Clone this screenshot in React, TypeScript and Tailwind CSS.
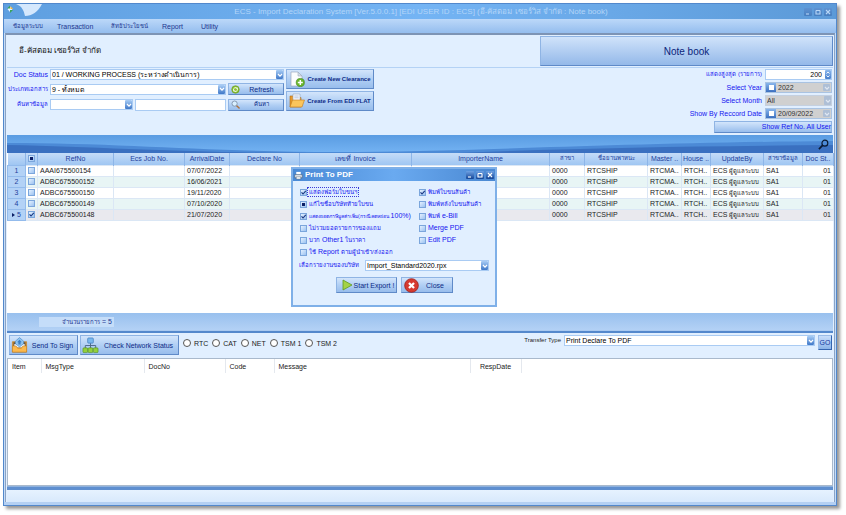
import { useState, type ReactNode } from "react";
import clsx from "clsx";

const MENU = [
  { label: "ข้อมูลระบบ", width: "w-[44px]", thai: true },
  { label: "Transaction", width: "w-[54px]" },
  { label: "สิทธิประโยชน์", width: "w-[51px]", thai: true },
  { label: "Report", width: "w-[39px]" },
  { label: "Utility", width: "w-[40px]" },
];

const COLUMNS = [
  { label: "RefNo", width: "w-[76px]" },
  { label: "Ecs Job No.", width: "w-[71px]" },
  { label: "ArrivalDate", width: "w-[45px]" },
  { label: "Declare No", width: "w-[70px]" },
  { label: "เลขที่ Invoice", width: "w-[112px]" },
  { label: "ImporterName", width: "w-[138px]" },
  { label: "สาขา", width: "w-[35px]", thai: true },
  { label: "ชื่อยานพาหนะ", width: "w-[63px]", thai: true },
  { label: "Master ..", width: "w-[34px]" },
  { label: "House ..", width: "w-[29px]" },
  { label: "UpdateBy", width: "w-[53px]" },
  { label: "สาขาข้อมูล", width: "w-[39px]", thai: true },
  { label: "Doc St..", width: "w-[31px]" },
];

const ROWS = [
  { ref: "AAAI675500154", date: "07/07/2022" },
  { ref: "ADBC675500152", date: "16/06/2021" },
  { ref: "ADBC675500150", date: "19/11/2020" },
  { ref: "ADBC675500149", date: "07/10/2020" },
  { ref: "ADBC675500148", date: "21/07/2020" },
];

const MESSAGE_COLUMNS = [
  { label: "Item", width: "w-[33px]" },
  { label: "MsgType", width: "w-[103px]" },
  { label: "DocNo", width: "w-[81px]" },
  { label: "Code", width: "w-[49px]" },
  { label: "Message", width: "w-[196px]" },
  { label: "RespDate", width: "w-[51px]" },
];

const NETWORKS = ["RTC", "CAT", "NET", "TSM 1", "TSM 2"];

type CheckState = "on" | "off" | "mixed";
type Option = { key: string; label: ReactNode; state: CheckState };

const LEFT_OPTIONS: Option[] = [
  { key: "form", label: <Thai>แสดงฟอร์มใบขนฯ</Thai>, state: "on" },
  { key: "company", label: <Thai>แก้ไขชื่อบริษัทท้ายใบขน</Thai>, state: "mixed" },
  {
    key: "vat",
    label: (
      <>
        <span className="text-[5px]">แสดงยอดภาษีมูลค่าเพิ่ม(กรณีลดหย่อน</span> 100%)
      </>
    ),
    state: "on",
  },
  { key: "free", label: <Thai>ไม่รวมยอดรายการของแถม</Thai>, state: "off" },
  {
    key: "other",
    label: (
      <>
        <Thai>บวก</Thai> Other1 <Thai>ในราคา</Thai>
      </>
    ),
    state: "off",
  },
  {
    key: "importer",
    label: (
      <>
        <Thai>ใช้</Thai> Report <Thai>ตามผู้นำเข้า/ส่งออก</Thai>
      </>
    ),
    state: "off",
  },
];

const RIGHT_OPTIONS: Option[] = [
  { key: "goods", label: <Thai>พิมพ์ใบขนสินค้า</Thai>, state: "on" },
  { key: "back", label: <Thai>พิมพ์หลังใบขนสินค้า</Thai>, state: "off" },
  {
    key: "ebill",
    label: (
      <>
        <Thai>พิมพ์</Thai> e-Bill
      </>
    ),
    state: "off",
  },
  { key: "merge", label: "Merge PDF", state: "off" },
  { key: "edit", label: "Edit PDF", state: "off" },
];

// Thai glyphs run wide next to the Latin text, so they are set one step smaller
function Thai({ children }: { children: ReactNode }) {
  return <span className="text-[6px]">{children}</span>;
}

function CheckBox({
  id,
  initial = "off",
  label,
}: {
  id?: string;
  initial?: CheckState;
  label?: string;
}) {
  const [state, setState] = useState<CheckState>(initial);
  return (
    <span className="relative block size-[7px] shrink-0">
      <input
        id={id}
        type="checkbox"
        aria-label={label}
        checked={state !== "off"}
        onChange={() => setState(state === "on" ? "off" : "on")}
        className="block size-[7px] appearance-none border border-[#7ba6dc] bg-linear-to-br from-[#e4f1ff] to-[#9cc2f0]"
      />
      {state === "on" && (
        <svg viewBox="0 0 7 7" className="pointer-events-none absolute inset-0 size-[7px]">
          <path d="M1.5 3.4 3 5 5.8 1.8" fill="none" stroke="#16357f" strokeWidth="1.1" />
        </svg>
      )}
      {state === "mixed" && (
        <span className="pointer-events-none absolute inset-[2px] bg-[#0b1f66]" />
      )}
    </span>
  );
}

function ArrowBox({ disabled = false }: { disabled?: boolean }) {
  return (
    <span
      className={clsx(
        "pointer-events-none absolute inset-y-px right-px flex w-[7px] items-center justify-center rounded-[1px]",
        disabled
          ? "bg-[#aebfd6]"
          : "bg-linear-to-b from-[#a9cdf5] to-[#3f78c8]"
      )}
    >
      <svg viewBox="0 0 6 6" className="size-[6px]">
        <path d="M1 2 3 4.2 5 2" fill="none" stroke={disabled ? "#dfe7f2" : "#fff"} strokeWidth="1.2" />
      </svg>
    </span>
  );
}

function Combo({
  id,
  value,
  label,
  className,
  disabled = false,
}: {
  id?: string;
  value: string;
  label?: string;
  className?: string;
  disabled?: boolean;
}) {
  return (
    <span className={clsx("relative block", className)}>
      <select
        id={id}
        aria-label={label}
        disabled={disabled}
        className={clsx(
          "block h-[11px] w-full appearance-none border pl-px leading-[9px] opacity-100",
          disabled ? "border-[#c4d0e0] bg-[#d0d0d0] text-[#333]" : "border-[#a9cbf3] bg-white text-black"
        )}
      >
        <option>{value}</option>
      </select>
      <ArrowBox disabled={disabled} />
    </span>
  );
}

function DateField({ id, value }: { id: string; value: string }) {
  return (
    <span className="relative flex h-[11px] w-[67px] items-center border border-[#a9c3e2] bg-[#d0d0d0]">
      <span className="flex h-full w-[10px] shrink-0 items-center justify-center bg-linear-to-b from-[#8ab6ec] to-[#3c70c0]">
        <input type="checkbox" aria-label={`Use ${value}`} className="size-[5px] appearance-none bg-white" />
      </span>
      <input
        id={id}
        defaultValue={value}
        disabled
        className="w-[46px] min-w-0 bg-transparent pl-[2px] leading-[9px] text-[#333]"
      />
      <ArrowBox disabled />
    </span>
  );
}

function PushButton({
  children,
  className,
  icon,
}: {
  children: ReactNode;
  className?: string;
  icon?: ReactNode;
}) {
  return (
    <button
      type="button"
      className={clsx(
        "flex items-center border border-[#8fb4e4] border-r-[#5f8ac8] border-b-[#5f8ac8] bg-linear-to-b from-[#d3e5fb] via-[#b1cff4] to-[#98bdec] text-[#0d2a86] hover:brightness-105",
        className
      )}
    >
      {icon}
      <span className="flex-1 whitespace-nowrap text-center">{children}</span>
    </button>
  );
}

function WindowButtons({ dim = false }: { dim?: boolean }) {
  const shapes = [
    { name: "Minimize", d: "M2 6h3" },
    { name: "Maximize", d: "M2 2.5h4M2 2.5v3.5h4V2.5" },
    { name: "Close", d: "M2 2 6 6M6 2 2 6" },
  ];
  return (
    <div className="flex gap-[2px]">
      {shapes.map((shape) => (
        <button
          key={shape.name}
          type="button"
          aria-label={shape.name}
          className={clsx(
            "size-[8px] rounded-[1px]",
            dim
              ? "bg-linear-to-b from-[#5f93d2] to-[#477ebf]"
              : "bg-linear-to-b from-[#6fa2e4] to-[#134596]"
          )}
        >
          <svg viewBox="0 0 8 8" className="size-[8px]">
            <path d={shape.d} fill="none" stroke={dim ? "#b8d6f6" : "#fff"} strokeWidth="1.1" />
          </svg>
        </button>
      ))}
    </div>
  );
}

function NewDocIcon() {
  return (
    <svg viewBox="0 0 16 16" className="size-[16px] shrink-0">
      <path d="M2 1h7l4 4v10H2z" fill="#fbfcfe" stroke="#9fabbd" strokeWidth=".7" />
      <path d="M9 1v4h4z" fill="#d4dce8" stroke="#9fabbd" strokeWidth=".6" />
      <circle cx="11.3" cy="11.5" r="4.1" fill="#68b52c" stroke="#3f851a" strokeWidth=".6" />
      <path d="M11.3 9v5M8.8 11.5h5" stroke="#fff" strokeWidth="1.5" />
    </svg>
  );
}

function FolderIcon() {
  return (
    <svg viewBox="0 0 16 16" className="size-[16px] shrink-0">
      <path d="M1 3h4l1 1.5h6V14H1z" fill="#e79a2b" stroke="#b26c12" strokeWidth=".6" />
      <path d="M4 1h7v9H4z" fill="#f6f8fc" stroke="#94a4ba" strokeWidth=".6" />
      <path d="M5.3 3h4.4M5.3 4.8h4.4" stroke="#9fb3d1" strokeWidth=".7" />
      <path d="M3.5 7h12L13 14H1z" fill="#fbc55b" stroke="#c27b1b" strokeWidth=".6" />
    </svg>
  );
}

function RefreshIcon() {
  return (
    <svg viewBox="0 0 10 10" className="size-[9px] shrink-0">
      <circle cx="5" cy="5" r="4.2" fill="#8ac22f" stroke="#5e8f1c" strokeWidth=".6" />
      <path d="M2.8 5.5a2.3 2.3 0 0 1 4-1.8M7.2 4.6a2.3 2.3 0 0 1-4 1.8" fill="none" stroke="#fff" strokeWidth="1" />
      <path d="M7.5 2.5v2H5.7zM2.5 7.5v-2h1.8z" fill="#fff" />
    </svg>
  );
}

function SearchIcon() {
  return (
    <svg viewBox="0 0 10 10" className="size-[9px] shrink-0">
      <path d="m6 6 3 3" stroke="#b0703a" strokeWidth="1.6" strokeLinecap="round" />
      <circle cx="4" cy="4" r="2.9" fill="#d9efff" stroke="#7f93ac" strokeWidth="1" />
    </svg>
  );
}

function SendIcon() {
  return (
    <svg viewBox="0 0 18 18" className="size-[17px] shrink-0">
      <path d="M1.5 5h15v11h-15z" fill="#f6ad3c" stroke="#b9761a" strokeWidth=".7" />
      <path d="M2.5 5.5h13V11h-13z" fill="#6b5334" />
      <path d="M3.5 7.5h11V11h-11z" fill="#eaf2fb" />
      <path d="M9 .6 13.4 4.500V7L9 10.500 4.600 7V4.500z" fill="#8fc4f0" stroke="#3f7fc0" strokeWidth=".6" />
      <path d="M9 3 11.500 5.500h-1.300V8H7.800V5.500H6.500z" fill="#3b7fc6" />
      <path d="M1.5 9.5h4L7 12h4l1.5-2.500h4V16h-15z" fill="#fcb94e" stroke="#b9761a" strokeWidth=".5" />
    </svg>
  );
}

function NetworkIcon() {
  return (
    <svg viewBox="0 0 18 18" className="size-[17px] shrink-0">
      <path d="M9 6v6M3.5 12V9h11v3" fill="none" stroke="#4c6688" strokeWidth="1" />
      <rect x="6" y="1" width="6" height="5.5" rx="1" fill="#79b8ee" stroke="#3d78b8" strokeWidth=".7" />
      <rect x="1" y="11.5" width="5" height="5" rx="1" fill="#93d03c" stroke="#4c8b1b" strokeWidth=".6" />
      <rect x="6.5" y="11.5" width="5" height="5" rx="1" fill="#93d03c" stroke="#4c8b1b" strokeWidth=".6" />
      <rect x="12" y="11.5" width="5" height="5" rx="1" fill="#93d03c" stroke="#4c8b1b" strokeWidth=".6" />
    </svg>
  );
}

function TitleBar() {
  return (
    <header className="relative flex h-[15px] items-center justify-end overflow-hidden bg-linear-to-r from-[#5f9fe0] via-[#74b4f4] to-[#5c9ad8] pr-[4px]">
      <svg viewBox="0 0 60 15" className="absolute top-0 left-0 h-[15px] w-[60px]">
        <path d="M12 0C18 2 20 7 21 12C28 12 34 8 38 0z" fill="#d5e8fd" />
        <path d="M6 2.5 8.5 5 6 8 3.5 5z" fill="#e9f6ff" />
        <path d="M6 1.5v3H3zM6 9V6h3z" fill="#3aa35c" />
        <path d="M6.5 2 9 5H6.5z" fill="#f3b73c" />
      </svg>
      <h1 className="flex-1 pl-[34px] text-center text-[8px] leading-[15px] whitespace-nowrap text-[#b3d5f8]">
        ECS - Import Declaration System [Ver.5.0.0.1] [EDI USER ID : ECS] (อี-คัสตอม เซอร์วิส จำกัด : Note book)
      </h1>
      <WindowButtons dim />
    </header>
  );
}

function FilterForm() {
  return (
    <section className="flex items-start justify-between border-t border-[#b4d2f5] pt-px pr-px pb-[2px]">
      <div className="flex gap-[2px]">
        <div className="grid w-[277px] grid-cols-[41px_minmax(0,1fr)] items-center gap-x-[2px] gap-y-[3px]">
          <label htmlFor="doc-status" className="text-right whitespace-nowrap text-[#1515f0]">
            Doc Status
          </label>
          <Combo id="doc-status" value="01 / WORKING PROCESS (ระหว่างดำเนินการ)" />
          <label htmlFor="doc-type" className="text-right text-[6px] whitespace-nowrap text-[#1515f0]">
            ประเภทเอกสาร
          </label>
          <div className="flex items-center gap-[2px]">
            <Combo id="doc-type" value="9 - ทั้งหมด" className="min-w-0 flex-1" />
            <PushButton className="h-[12px] w-[56px] pl-[2px]" icon={<RefreshIcon />}>
              Refresh
            </PushButton>
          </div>
          <label htmlFor="search-field" className="text-right text-[6px] whitespace-nowrap text-[#1515f0]">
            ค้นหาข้อมูล
          </label>
          <div className="flex items-center gap-[2px]">
            <Combo id="search-field" value="" className="w-[83px]" label="Search by" />
            <input
              aria-label="Search text"
              className="h-[12px] min-w-0 flex-1 border border-[#a9cbf3] bg-white px-px"
            />
            <PushButton className="h-[12px] w-[56px] pl-[2px] text-[6px]" icon={<SearchIcon />}>
              ค้นหา
            </PushButton>
          </div>
        </div>
        <div className="flex w-[88px] flex-col gap-[2px] text-[6px] font-bold">
          <PushButton className="h-[20px] pl-[2px]" icon={<NewDocIcon />}>
            Create New Clearance
          </PushButton>
          <PushButton className="h-[20px] pl-[2px]" icon={<FolderIcon />}>
            Create From EDI FLAT
          </PushButton>
        </div>
      </div>

      <div className="grid grid-cols-[1fr_67px] items-center gap-x-[3px] gap-y-[2px] text-right text-[#1515f0]">
        <label htmlFor="max-rows" className="text-[6px]">
          แสดงสูงสุด (รายการ)
        </label>
        <span className="relative block">
          <input
            id="max-rows"
            defaultValue="200"
            className="block h-[11px] w-full border border-[#a9cbf3] bg-white pr-[9px] text-right leading-[9px] text-black"
          />
          <span className="pointer-events-none absolute inset-y-px right-px w-[6px] rounded-[1px] bg-linear-to-b from-[#8db8ec] to-[#4a80cc]">
            <svg viewBox="0 0 6 9" className="h-[9px] w-[6px]">
              <path d="m1.5 3.5 1.5-1.5 1.5 1.5M1.5 5.5 3 7l1.5-1.5" fill="none" stroke="#fff" strokeWidth=".9" />
            </svg>
          </span>
        </span>
        <label htmlFor="year">Select Year</label>
        <DateField id="year" value="2022" />
        <label htmlFor="month">Select Month</label>
        <Combo id="month" value="All" disabled />
        <label htmlFor="record-date">Show By Reccord Date</label>
        <DateField id="record-date" value="20/09/2022" />
        <button
          type="button"
          className="col-span-2 h-[12px] w-[118px] justify-self-end border border-[#8fb4e4] border-b-[#5f8ac8] bg-linear-to-b from-[#d3e5fb] to-[#98bdec] text-right leading-[10px]"
        >
          Show Ref No. All User
        </button>
      </div>
    </section>
  );
}

function DeclarationGrid() {
  return (
    <table className="w-full table-fixed border-collapse">
      <colgroup>
        <col className="w-[18px]" />
        <col className="w-[12px]" />
        {COLUMNS.map((column) => (
          <col key={column.label} className={column.width} />
        ))}
      </colgroup>
      <thead>
        <tr className="h-[12px] bg-linear-to-b from-[#c5dcf8] to-[#9fc6f2] text-[#23409c]">
          <th className="border-r border-[#8db5e8] p-0" />
          <th className="border-r border-[#8db5e8] py-0 pr-0 pl-[2px]">
            <CheckBox initial="mixed" label="Select all" />
          </th>
          {COLUMNS.map((column) => (
            <th
              key={column.label}
              className={clsx(
                "overflow-hidden border-r border-[#8db5e8] p-0 text-center font-normal whitespace-nowrap",
                column.thai && "text-[6px]"
              )}
            >
              {column.label}
            </th>
          ))}
        </tr>
      </thead>
      <tbody>
        {ROWS.map((row, i) => {
          const current = i === ROWS.length - 1;
          return (
            <tr
              key={row.ref}
              className={clsx(
                "h-[11px] [&>td]:overflow-hidden [&>td]:border [&>td]:border-[#dbe7f5] [&>td]:py-0 [&>td]:pr-0 [&>td]:pl-[2px] [&>td]:whitespace-nowrap",
                current ? "bg-[#e9e9ee]" : i % 2 ? "bg-[#e8f5f5]" : "bg-white"
              )}
            >
              <th className="border border-[#93bbec] bg-[#b3d2f6] p-0 font-normal text-[#23409c]">
                <span className="flex items-center justify-center gap-[2px]">
                  {current && (
                    <svg viewBox="0 0 3 4" className="h-[4px] w-[3px]">
                      <path d="M0 0 3 2 0 4z" fill="#0b1f66" />
                    </svg>
                  )}
                  {i + 1}
                </span>
              </th>
              <td>
                <CheckBox initial={current ? "on" : "off"} label={`Select ${row.ref}`} />
              </td>
              <td>{row.ref}</td>
              <td />
              <td>{row.date}</td>
              <td />
              <td />
              <td />
              <td>0000</td>
              <td>RTCSHIP</td>
              <td>RTCMA..</td>
              <td>RTCH..</td>
              <td>
                ECS <Thai>ผู้ดูแลระบบ</Thai>
              </td>
              <td>SA1</td>
              <td className="text-right">
                <span className="pr-[2px]">01</span>
              </td>
            </tr>
          );
        })}
      </tbody>
    </table>
  );
}

function OptionList({ options, prefix }: { options: Option[]; prefix: string }) {
  return (
    <div className="flex flex-col">
      {options.map((option, i) => (
        <div key={option.key} className="flex h-[12px] items-center">
          <CheckBox id={`${prefix}-${option.key}`} initial={option.state} />
          <label
            htmlFor={`${prefix}-${option.key}`}
            className={clsx(
              "border px-px leading-[8px] whitespace-nowrap",
              prefix === "form" && i === 0 ? "border-dotted border-[#3b3bd8]" : "border-transparent"
            )}
          >
            {option.label}
          </label>
        </div>
      ))}
    </div>
  );
}

function PrintDialog() {
  return (
    <div
      role="dialog"
      aria-label="Print To PDF"
      className="absolute top-[14px] left-[284px] w-[206px] border-2 border-[#7fb0e8] bg-[#e1efff] pb-[12px] text-[#1515f0]"
    >
      <div className="flex h-[12px] items-center bg-linear-to-r from-[#4a8ad6] via-[#6aaaf0] to-[#4a88d2] pr-px pl-px">
        <svg viewBox="0 0 10 10" className="size-[9px]">
          <path d="M2.5 1h5v3h-5z" fill="#fff" />
          <path d="M.8 4h8.4v3.5H.8z" fill="#dfe5ec" stroke="#44576e" strokeWidth=".6" />
          <path d="M2.5 6.5h5V9h-5z" fill="#fff" stroke="#44576e" strokeWidth=".5" />
        </svg>
        <h2 className="flex-1 pl-[2px] text-[8px] leading-[12px] font-bold text-white">Print To PDF</h2>
        <WindowButtons />
      </div>
      <div className="grid grid-cols-[119px_1fr] pt-[5px] pl-[7px]">
        <OptionList options={LEFT_OPTIONS} prefix="form" />
        <OptionList options={RIGHT_OPTIONS} prefix="output" />
      </div>
      <div className="flex items-center pt-[2px] pr-[6px] pl-[6px]">
        <label htmlFor="report" className="w-[66px] text-[6px] whitespace-nowrap">
          เลือกรายงานของบริษัท
        </label>
        <Combo id="report" value="Import_Standard2020.rpx" className="flex-1" />
      </div>
      <div className="flex justify-center gap-[4px] pt-[6px]">
        <PushButton
          className="h-[16px] w-[61px] pl-[4px]"
          icon={
            <svg viewBox="0 0 12 12" className="size-[12px] shrink-0">
              <path d="M2 1v10l9-5z" fill="#a4d245" stroke="#5f9a22" strokeWidth=".8" />
            </svg>
          }
        >
          Start Export !
        </PushButton>
        <PushButton
          className="h-[16px] w-[52px] pl-[2px]"
          icon={
            <svg viewBox="0 0 16 16" className="size-[15px] shrink-0">
              <circle cx="8" cy="8" r="7.3" fill="#d63a30" stroke="#9a1c17" strokeWidth=".8" />
              <path d="m5.3 5.3 5.4 5.4M10.7 5.3l-5.4 5.4" stroke="#fff" strokeWidth="2.4" />
            </svg>
          }
        >
          Close
        </PushButton>
      </div>
    </div>
  );
}

function TransferBar() {
  return (
    <div className="flex h-[25px] items-start bg-[#e1efff] pt-[2px] pr-px pl-[2px]">
      <PushButton className="h-[20px] w-[69px] pl-px" icon={<SendIcon />}>
        Send To Sign
      </PushButton>
      <PushButton className="ml-[2px] h-[20px] w-[99px] pl-px" icon={<NetworkIcon />}>
        Check Network Status
      </PushButton>
      <div className="ml-[4px] flex h-[16px] items-center gap-[4px]">
        {NETWORKS.map((name) => (
          <label key={name} className="flex items-center gap-[3px] whitespace-nowrap">
            <input
              type="radio"
              name="network"
              className="size-[8px] appearance-none rounded-full border border-[#555] bg-white checked:bg-[#2d62b5]"
            />
            {name}
          </label>
        ))}
      </div>
      <label htmlFor="transfer" className="ml-auto pr-[3px] text-[6px] leading-[11px]">
        Transfer Type
      </label>
      <Combo id="transfer" value="Print Declare To PDF" className="w-[251px]" />
      <button
        type="button"
        className="ml-[3px] h-[15px] w-[14px] border border-[#9bbce8] border-r-[#3565b0] border-b-[#3565b0] bg-linear-to-b from-[#c9defa] to-[#8ab3e8] text-center text-[#1538a0]"
      >
        GO
      </button>
    </div>
  );
}

export default function App() {
  return (
    <div className="flex min-h-screen flex-col bg-white pt-[3px] pr-[9px] pb-[9px] pl-[3px] font-['Liberation_Sans','Noto_Sans',sans-serif] text-[7px] leading-[9px] text-[#222]">
      <div className="flex flex-1 flex-col border border-[#5288cc] bg-[#c5dcf7] shadow-[3px_3px_3px_#999]">
        <TitleBar />
        <nav className="flex h-[14px] items-center bg-linear-to-b from-[#bcd8f9] to-[#94bdee] pl-[9px] text-[#1c3690]">
          {MENU.map((item) => (
            <button
              key={item.label}
              type="button"
              className={clsx("text-left whitespace-nowrap", item.width, item.thai && "text-[6px]")}
            >
              {item.label}
            </button>
          ))}
        </nav>
        <main className="mx-px flex flex-1 flex-col border-x border-t-2 border-x-[#8ba3c4] border-t-[#7d94b5] bg-[#e1efff] px-px">
          <div className="flex h-[32px] items-center justify-between pl-[12px]">
            <h2 className="text-[8px] leading-[12px] whitespace-nowrap text-[#111]">อี-คัสตอม เซอร์วิส จำกัด</h2>
            <button
              type="button"
              className="h-[30px] w-[36%] border border-[#8fb4e4] border-r-[#5f8ac8] border-b-[#5f8ac8] bg-linear-to-b from-[#d0e3fa] to-[#94b9e9] text-[10px] text-[#0b1f7a]"
            >
              Note book
            </button>
          </div>
          <FilterForm />
          <div className="relative flex h-[18px] shrink-0 items-center justify-end overflow-hidden bg-linear-to-b from-[#5a9ce2] to-[#74b3f3] pr-[4px]">
            <svg viewBox="0 0 826 18" preserveAspectRatio="none" className="absolute inset-0 size-full">
              <path d="M0 8C120 8 200 17 330 17S600 8 826 6V18H0z" fill="#4c8ad6" />
              <path d="M0 10C100 12 180 18 300 18H0zM450 18C560 13 700 11 826 10V18z" fill="#3a70c0" />
            </svg>
            <svg viewBox="0 0 12 12" className="relative size-[11px]">
              <circle cx="7.5" cy="4.5" r="3.2" fill="none" stroke="#0a1a33" strokeWidth="1.3" />
              <path d="M5 7 1 11" stroke="#0a1a33" strokeWidth="1.8" />
            </svg>
          </div>
          <section className="relative min-h-[160px] bg-white">
            <DeclarationGrid />
            <PrintDialog />
          </section>
          <div className="flex h-[17px] items-center bg-linear-to-b from-[#98c0ee] to-[#b3d1f5] pl-[32px]">
            <div className="h-[10px] w-[75px] bg-[#c5ddf9] pr-[2px] text-right text-[#1c3690]">
              <Thai>จำนวนรายการ</Thai> = 5
            </div>
          </div>
          <div className="h-[3px] border-t border-[#a9c9f0] bg-[#5488cc]" />
          <TransferBar />
          <section className="flex-1 border border-[#a9b9cc] bg-white">
            <table className="w-full table-fixed border-collapse">
              <colgroup>
                {MESSAGE_COLUMNS.map((column) => (
                  <col key={column.label} className={column.width} />
                ))}
                <col />
              </colgroup>
              <thead>
                <tr className="h-[14px]">
                  {MESSAGE_COLUMNS.map((column) => (
                    <th
                      key={column.label}
                      className={clsx(
                        "border-r border-[#e4e8ee] p-0 font-normal",
                        column.label === "RespDate" ? "text-center" : "pl-[4px] text-left"
                      )}
                    >
                      {column.label}
                    </th>
                  ))}
                  <th />
                </tr>
              </thead>
            </table>
          </section>
          <div className="h-[4px] border-t border-[#8fb2de] bg-[#5f8fd0]" />
          <footer className="h-[12px] bg-linear-to-b from-[#e6f2ff] to-[#d8e9fc]" />
        </main>
        <div className="h-[3px] bg-[#b4d0f3]" />
      </div>
    </div>
  );
}
